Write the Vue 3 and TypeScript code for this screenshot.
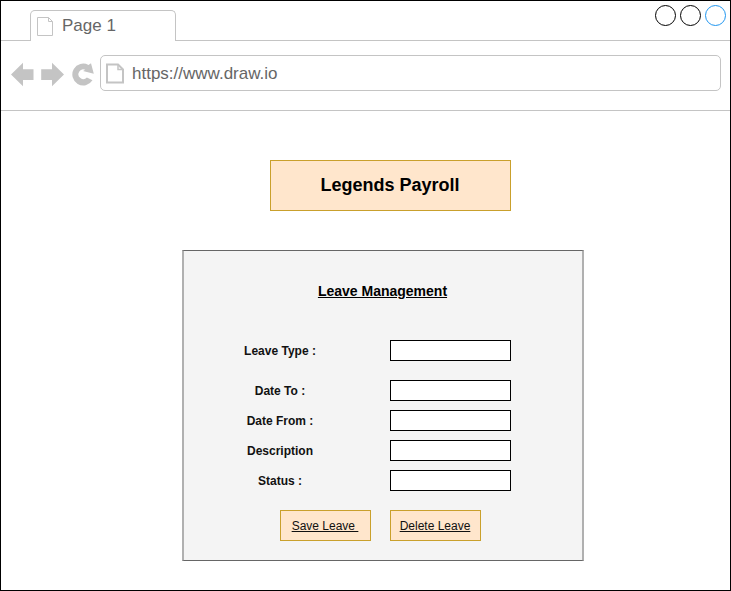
<script setup lang="ts">
import { reactive } from 'vue'

interface Field {
  id: string
  label: string
  spaced?: boolean
}

const fields: Field[] = [
  { id: 'type', label: 'Leave Type :', spaced: true },
  { id: 'to', label: 'Date To :' },
  { id: 'from', label: 'Date From :' },
  { id: 'description', label: 'Description' },
  { id: 'status', label: 'Status :' },
]

const values = reactive<Record<string, string>>({
  type: '',
  to: '',
  from: '',
  description: '',
  status: '',
})
</script>

<template>
  <div class="browser">
    <header class="tab-strip">
      <div class="strip-start"></div>
      <div class="tab">
        <svg class="tab-icon" width="17" height="20" viewBox="0 0 17 20">
          <path d="M.5 1.5H11.500L15.500 5.500V19.500H.5ZM11.500 1.500V5.500H15.500" />
        </svg>
        <span>Page 1</span>
      </div>
      <div class="strip-end">
        <i class="circle"></i>
        <i class="circle"></i>
        <i class="circle active"></i>
      </div>
    </header>
    <nav class="toolbar">
      <svg class="nav-icons" width="84" height="26" viewBox="0 0 84 26">
        <path d="M0 12.500L12 .7V7.300H22.500V18H12V24.300Z" />
        <path d="M53 12.500L41 .7V7.300H30.200V18H41V24.300Z" />
        <path
          d="M81.500 18.300A10.900 10.900 0 1 1 77.500 3L80 1.200L82.800 11.700L72 9L74.300 7.700A4.900 4.900 0 1 0 75.900 15.600Z"
        />
      </svg>
      <div class="address">
        <svg class="page-icon" width="18" height="21" viewBox="0 0 18 21">
          <path d="M1 1.500H12L17 6.500V19.500H1Z" />
          <path class="fold" d="M12 1.500V6.500H17" />
        </svg>
        <span>https://www.draw.io</span>
      </div>
    </nav>
    <main class="page">
      <h1 class="brand">Legends Payroll</h1>
      <form class="panel" @submit.prevent>
        <h2>Leave Management</h2>
        <div class="fields">
          <div v-for="f in fields" :key="f.id" class="row" :class="{ spaced: f.spaced }">
            <label :for="f.id">{{ f.label }}</label>
            <input :id="f.id" v-model="values[f.id]" type="text" />
          </div>
        </div>
        <div class="actions">
          <button type="button">Save Leave&nbsp;</button>
          <button type="button">Delete Leave</button>
        </div>
      </form>
    </main>
  </div>
</template>

<style>
body {
  margin: 0;
  background: #fff;
}
</style>

<style scoped>
* {
  box-sizing: border-box;
}
.browser {
  width: 731px;
  height: 591px;
  border: 1px solid #000;
  background: #fff;
  font-family: 'Liberation Sans', Arial, sans-serif;
  color: #000;
}
.tab-strip {
  display: flex;
  height: 40px;
}
.strip-start {
  width: 29px;
  border-bottom: 1px solid #c4c4c4;
}
.tab {
  display: flex;
  align-items: flex-start;
  width: 146px;
  height: 31px;
  margin-top: 9px;
  padding: 5px 0 0 6px;
  border: 1px solid #c4c4c4;
  border-bottom: 0;
  border-radius: 5px 5px 0 0;
  color: #666;
  font-size: 17px;
  line-height: 20px;
}
.tab span {
  margin-left: 8px;
}
.tab-icon {
  fill: none;
  stroke: #c4c4c4;
}
.strip-end {
  flex: 1;
  display: flex;
  justify-content: flex-end;
  gap: 4px;
  padding: 4px 4px 0 0;
  border-bottom: 1px solid #c4c4c4;
}
.circle {
  width: 21px;
  height: 21px;
  border: 1px solid #000;
  border-radius: 50%;
}
.circle.active {
  border-color: #1f96f0;
}
.toolbar {
  display: flex;
  align-items: flex-start;
  height: 70px;
  padding: 14px 9px 0 10px;
  border-bottom: 1px solid #c4c4c4;
}
.nav-icons {
  margin: 7px 5px 0 0;
  fill: #c4c4c4;
}
.address {
  flex: 1;
  display: flex;
  height: 36px;
  padding: 7px 0 0 5px;
  border: 1px solid #c4c4c4;
  border-radius: 5px;
  color: #666;
  font-size: 17px;
  line-height: 22px;
}
.address span {
  margin-left: 8px;
}
.page-icon {
  fill: none;
  stroke: #c4c4c4;
  stroke-width: 2;
}
.fold {
  stroke-width: 1.5;
}
.page {
  display: flex;
  flex-direction: column;
  padding: 49px 0 0 181px;
}
.brand {
  width: 241px;
  height: 51px;
  margin: 0 0 39px 88px;
  padding-right: 1px;
  border: 1px solid #c9a02c;
  background: #ffe6cc;
  font-size: 18px;
  line-height: 49px;
  text-align: center;
}
.panel {
  width: 402px;
  height: 311px;
  border: 1px solid #666;
  border-width: 1px 2px;
  border-color: #666 #b0b0b0;
  background: #f4f4f4;
}
h2 {
  margin: 32px 0 41px;
  padding-right: 1px;
  font-size: 14px;
  line-height: 16px;
  text-align: center;
  text-decoration: underline;
}
.fields {
  display: flex;
  flex-direction: column;
  gap: 9px;
}
.row {
  display: flex;
  height: 21px;
  padding-left: 36px;
}
.row.spaced {
  margin-bottom: 10px;
}
label {
  width: 120px;
  margin-right: 50px;
  color: #111;
  font-size: 12px;
  font-weight: bold;
  line-height: 23px;
  text-align: center;
}
input {
  width: 121px;
  height: 21px;
  padding: 0 4px;
  border: 1px solid #000;
  border-radius: 0;
  background: #fff;
  font: 12px 'Liberation Sans', Arial, sans-serif;
  outline: none;
}
.actions {
  display: flex;
  gap: 19px;
  padding: 19px 0 0 96px;
}
button {
  width: 91px;
  height: 31px;
  padding: 0 1px 0 0;
  border: 1px solid #c9a02c;
  border-radius: 0;
  background: #ffe6cc;
  color: #111;
  font: 12px 'Liberation Sans', Arial, sans-serif;
  text-decoration: underline;
}
</style>
